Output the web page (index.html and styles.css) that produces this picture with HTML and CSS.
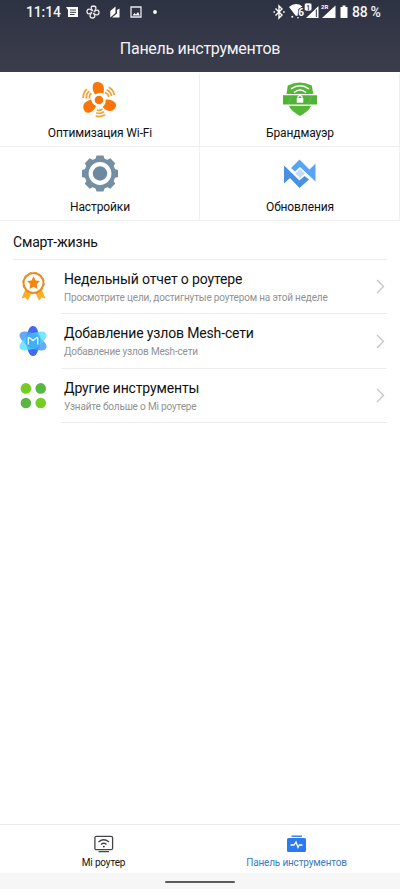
FILE: index.html
```html
<!DOCTYPE html>
<html lang="ru">
<head>
<meta charset="utf-8">
<title>Панель инструментов</title>
<link rel="stylesheet" href="styles.css">
</head>
<body>
<header class="header">
  <div class="status">
    <span class="clock">11:14</span>
    <svg class="status-left" width="100" height="24" viewBox="62 0 100 24">
      <path d="M66 7H78V17H68V10Z" fill="#fff"/>
      <path d="M70 10H76M70 12.3H76M70 14.5H74.5" stroke="#343949" stroke-width="1"/>
      <g fill="none" stroke="#e8e9ed" stroke-width="1.3">
        <path id="petal" d="M93 11C90.5 9 90.5 6 93.5 6C97 6.2 96.200 9.5 94.5 10.8"/><use href="#petal" transform="rotate(90 93 12)"/><use href="#petal" transform="rotate(180 93 12)"/><use href="#petal" transform="rotate(270 93 12)"/>
        <path d="M131 7H141V17H131Z"/>
      </g>
      <path d="M110.3 11L115.5 6.5V13L110.3 17.5ZM117 10L119.5 8.5V17.5H112L117 13.5Z" fill="#fff"/>
      <path d="M132.5 15.5L134.5 13L136 14.4L138 12L139.8 15.5Z" fill="#fff"/>
      <circle cx="155" cy="12" r="1.9" fill="#fff"/>
    </svg>
    <svg class="status-right" width="78" height="24" viewBox="272 0 78 24">
      <path d="M275.5 8.5L282 15L279 18V6L282 9L275.5 15.5M273.5 12H275M283 12H284.7" fill="none" stroke="#fff" stroke-width="1.4"/>
      <path d="M289 7Q295.500 1.500 302.500 6.500L298.500 9L297.500 16L295.500 15.500Z" fill="#fff"/>
      <circle cx="292.300" cy="16.800" r="1" fill="#fff"/><circle cx="298" cy="17.800" r=".8" fill="#fff"/>
      <text x="298.300" y="16" class="wifi-gen">6</text>
      <path d="M306 18L318.500 6V18ZM322 18L335.500 5.500V18Z" fill="#fff"/>
      <rect x="304.300" y="3" width="7.600" height="8" rx="2" fill="#fff" stroke="#303546" stroke-width=".7"/>
      <text x="306.200" y="9.500" class="sim-one">1</text>
      <path d="M316.300 9.500V17" stroke="#343949" stroke-width="1"/>
      <text x="321" y="9" class="sim-two">2R</text>
      <path d="M342.500 5.500H345.500V7H347.500V18H340.500V7H342.500Z" fill="#fff"/>
    </svg>
    <span class="battery">88 %</span>
  </div>
  <h1 class="title">Панель инструментов</h1>
</header>

<main class="content">
  <section class="tiles">
    <a class="tile">
      <svg width="40" height="40" viewBox="0 0 40 40">
        <g id="blade"><path d="M15.300 14.500C11.500 10 11.500 2 17.200 2C23.500 2 25 7.300 23.300 13.500Q19 11.800 15.300 14.500Z" fill="#fa760a"/><path d="M25 12.500Q28.500 14 28.800 16.800M26.700 9.800Q31 12 31.500 16M28.800 7.300Q34 10.500 34.300 15" fill="none" stroke="#f6a035" stroke-width="1.700"/></g>
        <use href="#blade" transform="rotate(120 19 20)"/><use href="#blade" transform="rotate(240 19 20)"/>
        <circle cx="19" cy="20" r="5.700" fill="#fff"/><circle cx="19" cy="20" r="4.300" fill="#fa760a"/>
      </svg>
      <span class="tile-label">Оптимизация Wi-Fi</span>
    </a>
    <a class="tile">
      <svg width="40" height="40" viewBox="0 0 40 40">
        <path d="M6.500 14L7.800 5.500Q19.500 -.5 31.800 5.500L33.300 14Z" fill="#54b836"/>
        <path d="M3 15.300H37V24.500H3Z" fill="#50b338"/>
        <path d="M9 26H31Q29 31 20 36Q11 31 9 26Z" fill="#54b836"/>
        <path d="M11 8.800Q20 2.800 29 8.800M14 12.500Q20 7.500 26 12.500" fill="none" stroke="#fff" stroke-width="1.500"/>
        <path d="M8 24L12 16.500M28 24L32 16.500" stroke="#5db94a" stroke-width="1.500"/>
        <path d="M16.700 18H23.300V22.700H16.700Z" fill="#fff"/><path d="M18 18.500V16.700Q20 14.500 22 16.700V18.500" fill="none" stroke="#fff" stroke-width="1.200"/>
      </svg>
      <span class="tile-label">Брандмауэр</span>
    </a>
    <a class="tile">
      <svg width="40" height="40" viewBox="0 0 40 40">
        <g fill="#748fa4">
          <circle cx="20" cy="19.500" r="15.500"/>
          <path id="teeth" d="M16.500 1.500H23.500L25 6.500V32.500L23.500 37.500H16.500L15 32.500V6.500Z"/>
          <use href="#teeth" transform="rotate(45 20 19.500)"/><use href="#teeth" transform="rotate(90 20 19.500)"/><use href="#teeth" transform="rotate(135 20 19.500)"/>
        </g>
        <circle cx="20" cy="19.500" r="9.300" fill="#6c899f" stroke="#fff" stroke-width="4.200"/>
      </svg>
      <span class="tile-label">Настройки</span>
    </a>
    <a class="tile">
      <svg width="40" height="40" viewBox="0 0 40 40">
        <path d="M11 14L19.500 5.500L29.500 15.500L35.500 9.500V27.500L20 13L15 17.500Z" fill="#56a4f2"/>
        <path d="M4 11.500L19.500 26.500L24.500 22L29 25.500L19.500 34L10 24L4 29.500Z" fill="#4990e2"/>
        <path d="M20 15L24.700 19.500L20 24L15.300 19.500Z" fill="#c2dcfa"/>
      </svg>
      <span class="tile-label">Обновления</span>
    </a>
  </section>

  <section class="life">
    <h2 class="life-title">Смарт-жизнь</h2>
    <a class="row">
      <svg class="row-icon" width="34" height="34" viewBox="0 0 34 34">
        <path d="M9 21L5.500 29.500L9.300 28.500L12 31.500L15 25ZM26 21L29.500 29.500L25.700 28.500L23 31.500L20 25Z" fill="#fcae24"/>
        <circle cx="17.500" cy="14" r="9.900" fill="#fff" stroke="#ea8b20" stroke-width="1.800"/>
        <circle cx="17.500" cy="14" r="10.700" fill="none" stroke="#ea8b20" stroke-width="1" stroke-dasharray="3.400 2.200"/>
        <path d="M17.500 7.300L19.500 11.500L24 12L20.700 15.300L21.500 20L17.500 17.700L13.500 20L14.300 15.300L11 12L15.500 11.500Z" fill="#f5840e"/>
      </svg>
      <div class="row-text"><div class="row-title">Недельный отчет о роутере</div><div class="row-desc">Просмотрите цели, достигнутые роутером на этой неделе</div></div>
      <svg class="chevron" width="9" height="15" viewBox="0 0 9 15"><path d="M1 1L7.500 7.500L1 14"/></svg>
    </a>
    <a class="row">
      <svg class="row-icon" width="34" height="34" viewBox="0 0 34 34">
        <path d="M17 2Q20 2 21.500 6L24 13Q25.500 17 24 21L21.500 28Q20 32 17 32Q14 32 12.500 28L10 21Q8.500 17 10 13L12.500 6Q14 2 17 2Z" fill="#4468f2"/>
        <path d="M17 2Q20 2 21.500 6L24 13Q25.500 17 24 21L21.500 28Q20 32 17 32Q14 32 12.500 28L10 21Q8.500 17 10 13L12.500 6Q14 2 17 2Z" fill="#4a9bf8" opacity=".85" transform="rotate(-60 17 17)"/>
        <path d="M17 2Q20 2 21.500 6L24 13Q25.500 17 24 21L21.500 28Q20 32 17 32Q14 32 12.500 28L10 21Q8.500 17 10 13L12.500 6Q14 2 17 2Z" fill="#4cdcff" opacity=".75" transform="rotate(60 17 17)"/>
        <circle cx="17" cy="17" r="7.500" fill="#3fb0f8"/>
        <path d="M12.300 20.500V14.500Q12.300 13 13.500 13.800L17 16.500L20.500 13.800Q21.700 13 21.700 14.500V20.500" fill="none" stroke="#e9f9ff" stroke-width="1.400"/>
      </svg>
      <div class="row-text"><div class="row-title">Добавление узлов Mesh-сети</div><div class="row-desc">Добавление узлов Mesh-сети</div></div>
      <svg class="chevron" width="9" height="15" viewBox="0 0 9 15"><path d="M1 1L7.500 7.500L1 14"/></svg>
    </a>
    <a class="row">
      <svg class="row-icon" width="34" height="34" viewBox="0 0 34 34">
        <circle cx="9.900" cy="10.400" r="5.300" fill="#75cd24"/><circle cx="24.700" cy="10.400" r="5.300" fill="#58b642"/>
        <circle cx="9.900" cy="25" r="5.300" fill="#58b642"/><circle cx="24.700" cy="25" r="5.300" fill="#75cd24"/>
      </svg>
      <div class="row-text"><div class="row-title">Другие инструменты</div><div class="row-desc">Узнайте больше о Mi роутере</div></div>
      <svg class="chevron" width="9" height="15" viewBox="0 0 9 15"><path d="M1 1L7.500 7.500L1 14"/></svg>
    </a>
  </section>
</main>

<nav class="tabs">
  <a class="tab">
    <svg width="22" height="20" viewBox="0 0 22 20">
      <rect x="1.900" y="2.300" width="17.700" height="13.400" rx="1.500" fill="none" stroke="#45464a" stroke-width="1.300"/>
      <path d="M5.500 8Q10.700 3.500 16 8M8 10.500Q10.700 8 13.500 10.500M5.500 17.700H16" fill="none" stroke="#45464a" stroke-width="1.300"/><circle cx="10.800" cy="12.600" r=".9" fill="#333"/>
    </svg>
    <span>Mi роутер</span>
  </a>
  <a class="tab tab-active">
    <svg width="22" height="20" viewBox="0 0 22 20">
      <path d="M5.500 2.200H16" stroke="#2f7be9" stroke-width="1.400"/>
      <rect x="1" y="4" width="19" height="14" rx="1.600" fill="#2c7af0"/>
      <path d="M4.500 11H8L10 8L12 13.500L13.300 11H16.500" fill="none" stroke="#fff" stroke-width="1.300"/>
    </svg>
    <span>Панель инструментов</span>
  </a>
</nav>
<div class="gesture"><div class="handle"></div></div>
</body>
</html>
```
FILE: styles.css
```css
* { box-sizing: border-box; }
body {
  margin: 0;
  height: 889px;
  display: flex;
  flex-direction: column;
  background: #fff;
  color: #111;
  font-family: Roboto, "Noto Sans", sans-serif;
  overflow: hidden;
}
h1, h2 { margin: 0; font-weight: 400; }
.header {
  height: 72px;
  flex: none;
  color: #f3f3f5;
  background: linear-gradient(#2d3243, #3b3d4b);
}
.status {
  height: 24px;
  display: flex;
  align-items: center;
  padding-left: 26px;
}
.clock { width: 36px; font-size: 14px; font-weight: 500; letter-spacing: -.15px; line-height: 25px; white-space: nowrap; }
.status-right { margin-left: 110px; }
.battery { margin-left: 2px; font-size: 14px; font-weight: 500; letter-spacing: -.3px; line-height: 25px; white-space: nowrap; }
.wifi-gen { font-size: 10px; font-weight: 700; fill: #fff; stroke: #343949; stroke-width: 1.2px; paint-order: stroke; }
.sim-one { font-size: 6.5px; font-weight: 700; fill: #343949; }
.sim-two { font-size: 6px; font-weight: 700; fill: #fff; }
.title {
  height: 48px;
  font-size: 16px;
  letter-spacing: -.3px;
  line-height: 49px;
  text-align: center;
}
.content { flex: 1; }
.tiles {
  display: grid;
  grid-template-columns: 200px 200px;
  grid-auto-rows: 74px;
  height: 149px;
  padding-top: 1px;
}
.tile {
  display: flex;
  flex-direction: column;
  align-items: center;
  padding-top: 7px;
  border-right: 1px solid #f0f0f0;
  border-bottom: 1px solid #f0f0f0;
}
.tile-label {
  font-size: 12px;
  letter-spacing: -.12px;
  line-height: 16px;
  margin-top: 5px;
  padding-left: 1px;
  white-space: nowrap;
}
.life { padding: 0 13px; }
.life-title {
  height: 39px;
  font-size: 14px;
  letter-spacing: -.17px;
  line-height: 43px;
  border-bottom: 1px solid #ebebeb;
}
.row { display: flex; align-items: center; height: 54.4px; }
.row-icon { flex: none; margin: 0 0 2px 3px; }
.row-text {
  flex: 1;
  align-self: stretch;
  margin: 0 -11px 0 11px;
  padding: 9px 0 0 3px;
  border-bottom: 1px solid #ededed;
}
.row-title { font-size: 14px; letter-spacing: -.15px; line-height: 20px; white-space: nowrap; }
.row-desc { font-size: 10px; letter-spacing: -.17px; line-height: 17px; color: #929292; white-space: nowrap; }
.chevron { flex: none; margin: 0 2px 1px 0; fill: none; stroke: #c4c4c4; stroke-width: 1.3; }
.tabs {
  display: grid;
  grid-template-columns: 207px 179px;
  height: 49px;
  border-top: 1px solid #e9e9e9;
}
.tab {
  display: flex;
  flex-direction: column;
  align-items: center;
  padding-top: 9px;
  font-size: 10px;
  letter-spacing: -.17px;
  line-height: 17px;
  white-space: nowrap;
}
.tab-active { color: #397bc4; }
.gesture {
  height: 16px;
  display: flex;
  justify-content: center;
  padding-top: 8px;
  background: #f6f6f6;
}
.handle { width: 70px; height: 2px; border-radius: 1px; background: #5c5a5a; }
```
